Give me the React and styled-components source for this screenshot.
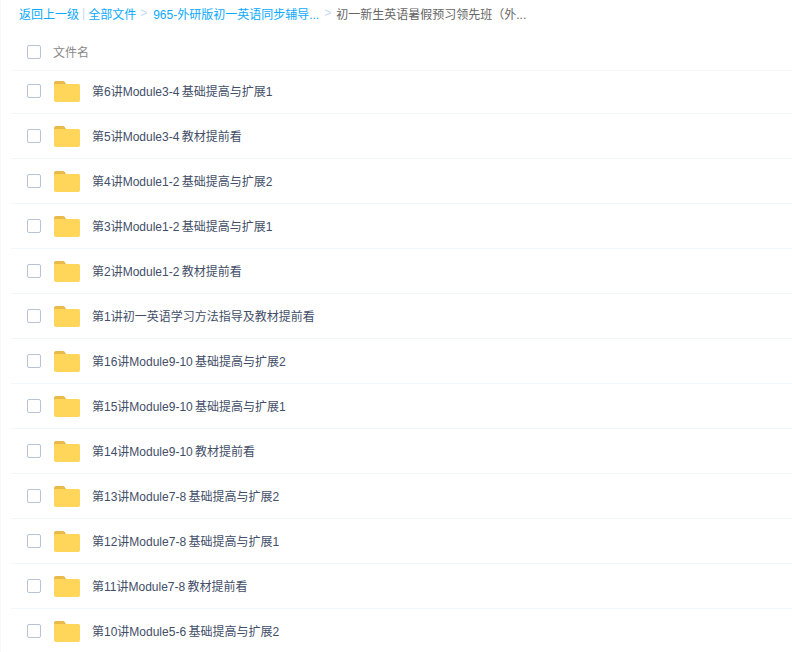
import { createGlobalStyle } from 'styled-components'
import styled from 'styled-components'

const GlobalStyle = createGlobalStyle`
    html, body {
        margin: 0;
        padding: 0;
        height: 100%;
        overflow: hidden;
        background: #fff;
    }
    body {
        font-family: "Liberation Sans", "Noto Sans CJK SC", sans-serif;
        font-size: 12px;
        color: #424e67;
    }
`;

const Page = styled.div`
    width: 792px;
    height: 652px;
    overflow: hidden;
    box-sizing: border-box;
    padding-left: 10px;
    border-left: 1px solid #f8f8f8;
`;

const Crumbs = styled.div`
    box-sizing: border-box;
    height: 28px;
    padding: 0 0 2px 8px;
    display: flex;
    align-items: center;
    white-space: nowrap;
    color: #666;
`;

const CrumbLink = styled.a`
    color: #09aaff;
    text-decoration: none;
`;

const Pipe = styled.span`
    color: #c4d8f4;
    margin: 0 3px;
`;

const Arrow = styled.span`
    color: #c4d8f4;
    margin: 0 ${props => (props.$last ? '5px' : '6px')} 0 ${props => (props.$last ? '5px' : '4px')};
`;

const Header = styled.div`
    box-sizing: border-box;
    height: 43px;
    padding: 6px 0 0 16px;
    display: flex;
    align-items: center;
    border-bottom: 1px solid #f7f7f7;
    color: #888;
`;

const Row = styled.div`
    box-sizing: border-box;
    height: ${props => (props.$first ? '43px' : '45px')};
    padding: 0 0 ${props => (props.$first ? '2px' : '0')} 16px;
    display: flex;
    align-items: center;
    border-bottom: 1px solid #f2f6fd;
`;

const Check = styled.span`
    box-sizing: border-box;
    width: 14px;
    height: 14px;
    flex: none;
    border: 1px solid #b8c4d6;
    border-radius: 2px;
    background: #fff;
`;

const HeaderName = styled.span`
    margin-left: 12px;
    padding-bottom: 2px;
`;

const FolderIcon = styled.svg`
    width: 26px;
    height: 21px;
    flex: none;
    margin: 1px 0 0 13px;
`;

const Name = styled.span`
    margin-left: 12px;
    padding-bottom: 2px;
    white-space: nowrap;
    word-spacing: -1px;
`;

const files = [
    '第6讲Module3-4 基础提高与扩展1',
    '第5讲Module3-4 教材提前看',
    '第4讲Module1-2 基础提高与扩展2',
    '第3讲Module1-2 基础提高与扩展1',
    '第2讲Module1-2 教材提前看',
    '第1讲初一英语学习方法指导及教材提前看',
    '第16讲Module9-10 基础提高与扩展2',
    '第15讲Module9-10 基础提高与扩展1',
    '第14讲Module9-10 教材提前看',
    '第13讲Module7-8 基础提高与扩展2',
    '第12讲Module7-8 基础提高与扩展1',
    '第11讲Module7-8 教材提前看',
    '第10讲Module5-6 基础提高与扩展2',
]

function Folder() {
    return (
        <FolderIcon viewBox="0 0 26 21">
            <path d="M0 2a2 2 0 0 1 2-2h7a2 2 0 0 1 1.6.8L12 3v3H0z" fill="#e9b949" />
            <path d="M0 4a1 1 0 0 1 1-1h23.5a1.5 1.5 0 0 1 1.5 1.5V19a2 2 0 0 1-2 2H2a2 2 0 0 1-2-2z" fill="#ffd659" />
        </FolderIcon>
    )
}

export default function App() {
    return (
        <Page>
            <GlobalStyle />
            <Crumbs>
                <CrumbLink>返回上一级</CrumbLink>
                <Pipe>|</Pipe>
                <CrumbLink>全部文件</CrumbLink>
                <Arrow>&gt;</Arrow>
                <CrumbLink>965-外研版初一英语同步辅导...</CrumbLink>
                <Arrow $last>&gt;</Arrow>
                <span>初一新生英语暑假预习领先班（外...</span>
            </Crumbs>
            <Header>
                <Check />
                <HeaderName>文件名</HeaderName>
            </Header>
            {files.map((name, i) => (
                <Row key={name} $first={i === 0}>
                    <Check />
                    <Folder />
                    <Name>{name}</Name>
                </Row>
            ))}
        </Page>
    )
}
